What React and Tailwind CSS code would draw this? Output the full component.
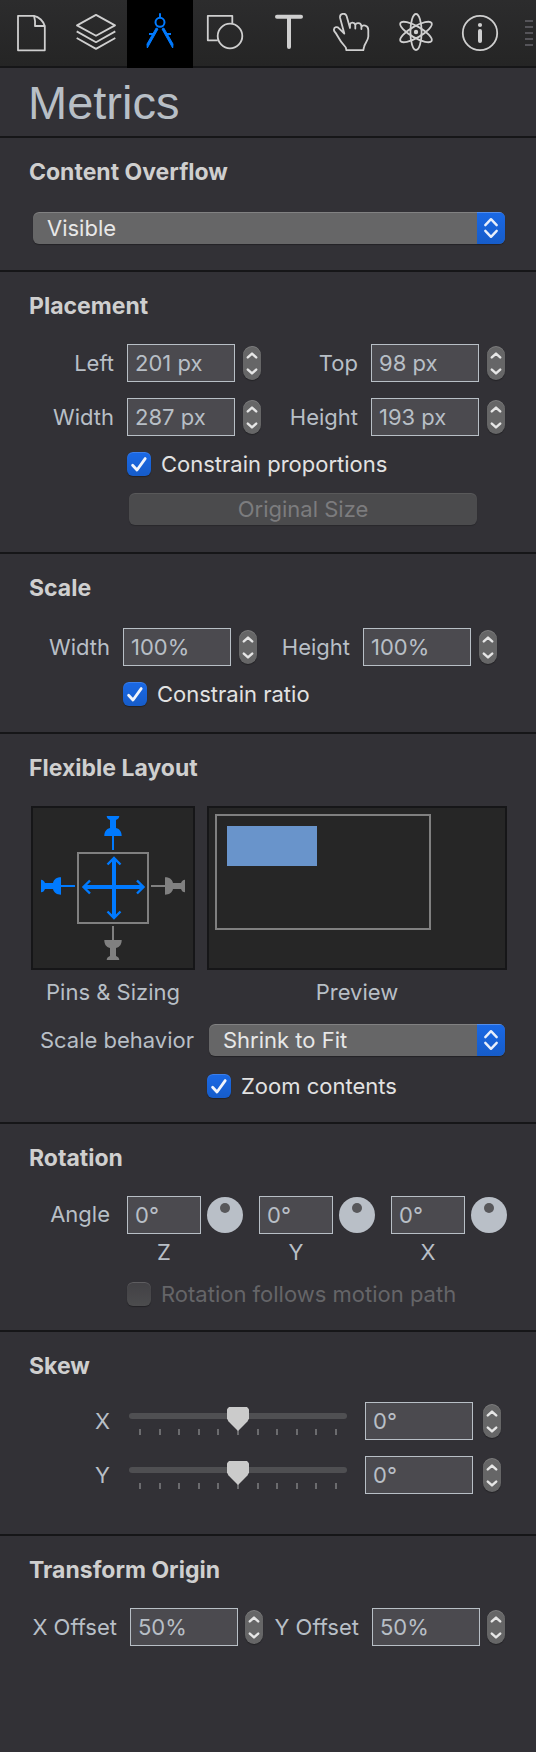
import React, { useId } from "react";

function DocumentIcon() {
  return (
    <svg width="40" height="40" viewBox="0 0 40 40" fill="none" stroke="currentColor" strokeWidth="1.8" strokeLinejoin="round" aria-hidden="true">
      <path d="M22 2.8H6V37.3H32.8V13C31.5 8.5 27 3.6 22 2.8Z" />
      <path d="M22 2.8C23 6 23.3 9.5 23 13H32.8" />
    </svg>
  );
}

function LayersIcon() {
  return (
    <svg width="40" height="40" viewBox="0 0 40 40" fill="none" stroke="currentColor" strokeWidth="1.8" strokeLinejoin="round" aria-hidden="true">
      <path d="M20 1.9L39 12.4L20 22.8L1 12.4Z" />
      <path d="M0.7 18.4L20 29.2L39.3 18.4" />
      <path d="M0.7 25L20 35.9L39.3 25" />
    </svg>
  );
}

function CompassIcon() {
  return (
    <svg width="40" height="40" viewBox="0 0 40 40" fill="none" stroke="currentColor" strokeWidth="2" aria-hidden="true">
      <path d="M20 0.3V4.8" />
      <circle cx="20" cy="9.3" r="4.5" />
      <path d="M16.2 15L18 16L7.3 35L7 31Z" fill="currentColor" strokeWidth="1" />
      <path d="M23.8 15L22 16L32.7 35L33 31Z" fill="currentColor" strokeWidth="1" />
      <path d="M9 21H13.5M26.5 21H31" strokeWidth="1.8" />
    </svg>
  );
}

function ShapesIcon() {
  return (
    <svg width="40" height="40" viewBox="0 0 40 40" fill="none" stroke="currentColor" strokeWidth="1.8" strokeLinejoin="round" aria-hidden="true">
      <path d="M27.3 10.5V2.8H2.8V27.3H12.8" />
      <circle cx="25" cy="23" r="12.3" />
    </svg>
  );
}

function TypeIcon() {
  return (
    <svg width="40" height="40" viewBox="0 0 40 40" fill="none" stroke="currentColor" strokeWidth="4" strokeLinecap="round" aria-hidden="true">
      <path d="M8 3.8H32M20 4V34" />
    </svg>
  );
}

function HandIcon() {
  return (
    <svg width="40" height="40" viewBox="0 0 40 40" fill="none" stroke="currentColor" strokeWidth="1.8" strokeLinejoin="round" strokeLinecap="round" aria-hidden="true">
      <path d="M11.3 20.5L7.1 5C6.3 0.3 12.4 -0.6 13.6 3L17 15V11.5C17.5 9 21.5 9 22.3 12V15.5V12C23.3 9.3 27.8 9.6 28.4 13V16V14C29.5 11.7 35.3 11.5 35.3 17V23.5C35.3 27.5 31.5 30.5 31 34L30.3 37.2H13.4L12.8 34.5C8.5 30 5 24 3.5 21.2C2.5 19.3 0.8 18.4 0.9 16.7C1.2 14 4.2 13.3 6 15.3Z" />
    </svg>
  );
}

function AtomIcon() {
  return (
    <svg width="40" height="40" viewBox="0 0 40 40" fill="none" stroke="currentColor" strokeWidth="1.8" aria-hidden="true">
      <ellipse cx="20" cy="19" rx="5.6" ry="18" />
      <ellipse cx="20" cy="19" rx="5.6" ry="18" transform="rotate(60 20 19)" />
      <ellipse cx="20" cy="19" rx="5.6" ry="18" transform="rotate(-60 20 19)" />
      <circle cx="20" cy="19" r="2.2" fill="currentColor" stroke="none" />
    </svg>
  );
}

function InfoIcon() {
  return (
    <svg width="40" height="40" viewBox="0 0 40 40" fill="none" stroke="currentColor" aria-hidden="true">
      <circle cx="20" cy="20" r="17.2" strokeWidth="1.8" />
      <circle cx="20" cy="12" r="2.1" fill="currentColor" stroke="none" />
      <path d="M20 18V28" strokeWidth="4" strokeLinecap="round" />
    </svg>
  );
}

const TABS = [
  { name: "Document", Icon: DocumentIcon },
  { name: "Elements", Icon: LayersIcon },
  { name: "Metrics", Icon: CompassIcon, active: true },
  { name: "Shapes", Icon: ShapesIcon },
  { name: "Typography", Icon: TypeIcon },
  { name: "Actions", Icon: HandIcon },
  { name: "Physics", Icon: AtomIcon },
  { name: "Identity", Icon: InfoIcon },
];

function Toolbar() {
  return (
    <nav aria-label="Inspectors" className="flex h-17 bg-[#161618]">
      {TABS.map(({ name, Icon, active }) => (
        <button
          key={name}
          type="button"
          aria-label={name}
          aria-pressed={!!active}
          className={
            active
              ? "flex w-[66px] shrink-0 items-center justify-center bg-black pb-0.5 text-[#007aff]"
              : "mb-0.5 flex min-w-0 flex-1 items-center justify-center bg-linear-to-b from-[#2c2c2d] to-[#252525] text-[#cfcfcf]"
          }
        >
          <Icon />
        </button>
      ))}
      <div className="mb-0.5 flex w-6 shrink-0 flex-col items-end justify-center gap-1 bg-linear-to-b from-[#2c2c2d] to-[#252525] pr-[3px]" aria-hidden="true">
        {[0, 1, 2, 3, 4].map((i) => (
          <span key={i} className="h-0.5 w-2 bg-[#555459]" />
        ))}
      </div>
    </nav>
  );
}

function Section({ title, className, children }) {
  return (
    <section className={`pt-5 ${className}`}>
      <h2 className="pl-[29px] text-[23px] leading-7 font-bold text-[#cfcfcf]">{title}</h2>
      {children}
    </section>
  );
}

function Stepper({ name }) {
  return (
    <div className="flex h-[34px] w-[18px] shrink-0 flex-col overflow-hidden rounded-[9px] bg-[#666667] shadow-[0_1px_1px_rgba(0,0,0,0.3),inset_0_1px_0_rgba(255,255,255,0.15)]">
      <button type="button" aria-label={`Increase ${name}`} className="flex flex-1 items-center justify-center">
        <svg width="12" height="8" viewBox="0 0 12 8" fill="none" stroke="#e6e6e6" strokeWidth="2.4" strokeLinecap="round" strokeLinejoin="round" aria-hidden="true">
          <path d="M1.8 6.4L6 2.6L10.2 6.4" />
        </svg>
      </button>
      <button type="button" aria-label={`Decrease ${name}`} className="flex flex-1 items-center justify-center">
        <svg width="12" height="8" viewBox="0 0 12 8" fill="none" stroke="#e6e6e6" strokeWidth="2.4" strokeLinecap="round" strokeLinejoin="round" aria-hidden="true">
          <path d="M1.8 1.6L6 5.4L10.2 1.6" />
        </svg>
      </button>
    </div>
  );
}

const FIELD = "h-[38px] border border-[#b8bfc6] bg-[#4b4a4f] pl-[7px] text-[22px] text-[#b8bfc6] outline-none";

function Field({ label, value, name, tight }) {
  const id = useId();
  return (
    <div className="flex items-center">
      <label htmlFor={id} className="mr-[13px] min-w-0 flex-1 text-right whitespace-nowrap">
        {label}
      </label>
      <input id={id} type="text" defaultValue={value} className={`${FIELD} w-[108px] shrink-0 ${tight ? "mr-[7px]" : "mr-2"}`} />
      <Stepper name={name || label} />
    </div>
  );
}

function Check({ label, disabled }) {
  return (
    <label className={`flex w-fit items-center gap-2.5 leading-6 ${disabled ? "text-[#656568]" : "text-[#e2e2e2]"}`}>
      <span className="grid size-6 shrink-0">
        <input
          type="checkbox"
          defaultChecked={!disabled}
          disabled={disabled}
          className="peer size-6 appearance-none rounded-[6px] bg-[#565658] shadow-[0_1px_1px_rgba(0,0,0,0.3),inset_0_1px_0_rgba(255,255,255,0.15)] [grid-area:1/1] checked:bg-linear-to-b checked:from-[#1a69e6] checked:to-[#165cc9] disabled:bg-linear-to-b disabled:from-[#424145] disabled:to-[#4c4c4e]"
        />
        <svg viewBox="0 0 24 24" fill="none" stroke="#f0f4fb" strokeWidth="2.8" strokeLinecap="round" strokeLinejoin="round" className="pointer-events-none invisible size-6 [grid-area:1/1] peer-checked:visible" aria-hidden="true">
          <path d="M5.6 13.2L10 18L18.2 6.6" />
        </svg>
      </span>
      {label}
    </label>
  );
}

function Dropdown({ id, name, options }) {
  return (
    <div className="relative h-8 overflow-hidden rounded-[6px] bg-[#666667] shadow-[0_1px_1px_rgba(0,0,0,0.3)]">
      <select
        id={id}
        aria-label={id ? undefined : name}
        className="h-8 w-full appearance-none rounded-[6px] pr-9 pl-3.5 text-[22px] text-[#e8e8e8] shadow-[inset_0_1px_0_rgba(255,255,255,0.18)] outline-none"
      >
        {options.map((option) => (
          <option key={option}>{option}</option>
        ))}
      </select>
      <span className="pointer-events-none absolute inset-y-0 right-0 flex w-7 items-center justify-center bg-linear-to-b from-[#1a69e6] to-[#165cc9] shadow-[inset_0_1px_0_rgba(255,255,255,0.25)]">
        <svg width="16" height="22" viewBox="0 0 16 22" fill="none" stroke="#e8effb" strokeWidth="2.4" strokeLinecap="round" strokeLinejoin="round" aria-hidden="true">
          <path d="M2.3 8.2L8 2.2L13.7 8.2M2.3 13.8L8 19.8L13.7 13.8" />
        </svg>
      </span>
    </div>
  );
}

const PIN = "M73.7 8H86.3C86.3 10 85 11.3 83 12V20C87 21 88.7 24 88.7 28H81V42H79V28H71.3C71.3 24 73 21 77 20V12C75 11.3 73.7 10 73.7 8Z";

function PinsDiagram() {
  return (
    <svg viewBox="0 0 160 160" className="block size-40" role="img" aria-label="Pins and sizing">
      <rect x="45" y="45" width="70" height="70" fill="none" stroke="#808080" strokeWidth="2" />
      <path d={PIN} fill="#007aff" />
      <path d={PIN} fill="#007aff" transform="translate(0 -2) rotate(-90 80 80)" />
      <path d={PIN} fill="#808080" transform="translate(0 -2) rotate(90 80 80)" />
      <path d={PIN} fill="#808080" transform="rotate(180 80 80)" />
      <g fill="none" stroke="#007aff">
        <path d="M81 51V109M51 79H109" strokeWidth="4" />
        <path d="M74.5 56.5L81 50L87.5 56.5M74.5 103.5L81 110L87.5 103.5M57 72.5L50.5 79L57 85.5M104 72.5L110.5 79L104 85.5" strokeWidth="2.4" />
      </g>
    </svg>
  );
}

function PreviewDiagram() {
  return (
    <div className="border-2 border-[#161618] bg-[#262626] p-1.5">
      <div className="h-[116px] w-[216px] border-2 border-[#808080] p-2.5">
        <div className="h-10 w-[90px] bg-[#6994cb]" />
      </div>
    </div>
  );
}

function Angle({ axis }) {
  const id = useId();
  return (
    <div className="flex min-w-0 flex-1 gap-1.5">
      <div className="flex min-w-0 flex-1 flex-col gap-1">
        <input id={id} type="text" defaultValue="0°" className={`${FIELD} w-full`} />
        <label htmlFor={id} className="text-center leading-7">
          {axis}
        </label>
      </div>
      <button type="button" aria-label={`${axis} angle dial`} className="mt-px flex size-9 shrink-0 justify-center rounded-full bg-[#b9bfc7] pt-1.5">
        <span className="size-2.5 rounded-full bg-[#57575a]" />
      </button>
    </div>
  );
}

function SkewRow({ axis }) {
  const id = useId();
  return (
    <div className="flex items-center pr-[35px] pl-[31px]">
      <label htmlFor={id} className="mr-[19px] w-[79px] text-right">
        {axis}
      </label>
      <div className="mr-[18px] grid h-7 min-w-0 flex-1">
        <div className="mt-1.5 h-1.5 rounded-full bg-[#4f4f52] [grid-area:1/1]" />
        <div className="flex items-end justify-between px-2.5 [grid-area:1/1]" aria-hidden="true">
          {[0, 1, 2, 3, 4, 5, 6, 7, 8, 9, 10].map((i) => (
            <span key={i} className="h-1.5 w-0.5 bg-[#6b6b6e]" />
          ))}
        </div>
        <input
          type="range"
          min="-90"
          max="90"
          defaultValue="0"
          aria-label={`Skew ${axis} slider`}
          className="z-10 h-6 w-full min-w-0 appearance-none bg-transparent [grid-area:1/1] [&::-webkit-slider-thumb]:h-6 [&::-webkit-slider-thumb]:w-[22px] [&::-webkit-slider-thumb]:appearance-none [&::-webkit-slider-thumb]:bg-[#cbcbcb] [&::-webkit-slider-thumb]:[clip-path:polygon(9%_0,91%_0,100%_9%,100%_48%,93%_60%,50%_100%,7%_60%,0_48%,0_9%)]"
        />
      </div>
      <input id={id} type="text" defaultValue="0°" className={`${FIELD} mr-2.5 w-[108px] shrink-0`} />
      <Stepper name={`skew ${axis}`} />
    </div>
  );
}

export default function App() {
  return (
    <main className="min-h-screen bg-[#323136] font-['Inter','Liberation_Sans',sans-serif] text-[22px] text-[#b8bfc6]">
      <Toolbar />
      <header className="flex h-[70px] items-center border-b-2 border-[#161618] pl-7">
        <h1 className="font-['Liberation_Sans',Arial,sans-serif] text-[47px] leading-none">Metrics</h1>
      </header>

      <div className="divide-y-2 divide-[#161618]">
        <Section title="Content Overflow" className="pb-[26px]">
          <div className="mt-[26px] pr-[31px] pl-[33px]">
            <Dropdown name="Content overflow" options={["Visible", "Hidden", "Scroll"]} />
          </div>
        </Section>

        <Section title="Placement" className="pb-[27px]">
          <div className="mt-6 grid grid-cols-2 gap-x-3.5 gap-y-4 px-[31px]">
            <Field label="Left" value="201 px" />
            <Field label="Top" value="98 px" />
            <Field label="Width" value="287 px" />
            <Field label="Height" value="193 px" />
          </div>
          <div className="mt-4 pl-[127px]">
            <Check label="Constrain proportions" />
          </div>
          <div className="mt-[17px] flex pr-[59px] pl-[129px]">
            <button type="button" disabled className="h-8 flex-1 rounded-[6px] bg-[#4b4b4d] text-[#7c7c7e] shadow-[0_1px_1px_rgba(0,0,0,0.2),inset_0_1px_0_rgba(255,255,255,0.08)]">
              Original Size
            </button>
          </div>
        </Section>

        <Section title="Scale" className="pb-[26px]">
          <div className="mt-[26px] grid grid-cols-2 gap-x-3.5 pr-[39px] pl-[31px]">
            <Field label="Width" value="100%" name="scale width" />
            <Field label="Height" value="100%" name="scale height" />
          </div>
          <div className="mt-4 pl-[123px]">
            <Check label="Constrain ratio" />
          </div>
        </Section>

        <Section title="Flexible Layout" className="pb-6">
          <div className="mt-6 grid grid-cols-[164px_1fr] gap-x-3 gap-y-2 pr-[29px] pl-[31px] text-center leading-7">
            <div className="border-2 border-[#161618] bg-[#262626]">
              <PinsDiagram />
            </div>
            <PreviewDiagram />
            <p>Pins &amp; Sizing</p>
            <p>Preview</p>
          </div>
          <div className="mt-[18px] grid grid-cols-[163px_1fr] items-center gap-x-[15px] px-[31px]">
            <label htmlFor="scale-behavior" className="text-right leading-8 whitespace-nowrap">
              Scale behavior
            </label>
            <Dropdown id="scale-behavior" options={["Shrink to Fit", "Expand to Fit"]} />
          </div>
          <div className="mt-[18px] pl-[207px]">
            <Check label="Zoom contents" />
          </div>
        </Section>

        <Section title="Rotation" className="pb-6">
          <div className="mt-6 flex gap-4 pr-[29px] pl-[31px]">
            <span className="mr-px w-[79px] shrink-0 text-right leading-9">Angle</span>
            <Angle axis="Z" />
            <Angle axis="Y" />
            <Angle axis="X" />
          </div>
          <div className="mt-4 pl-[127px]">
            <Check label="Rotation follows motion path" disabled />
          </div>
        </Section>

        <Section title="Skew" className="pb-10">
          <div className="mt-[22px] flex flex-col gap-4">
            <SkewRow axis="X" />
            <SkewRow axis="Y" />
          </div>
        </Section>

        <Section title="Transform Origin" className="pb-10">
          <div className="mt-6 grid grid-cols-2 gap-x-2.5 px-[31px]">
            <Field label="X Offset" value="50%" tight />
            <Field label="Y Offset" value="50%" tight />
          </div>
        </Section>
      </div>
    </main>
  );
}
